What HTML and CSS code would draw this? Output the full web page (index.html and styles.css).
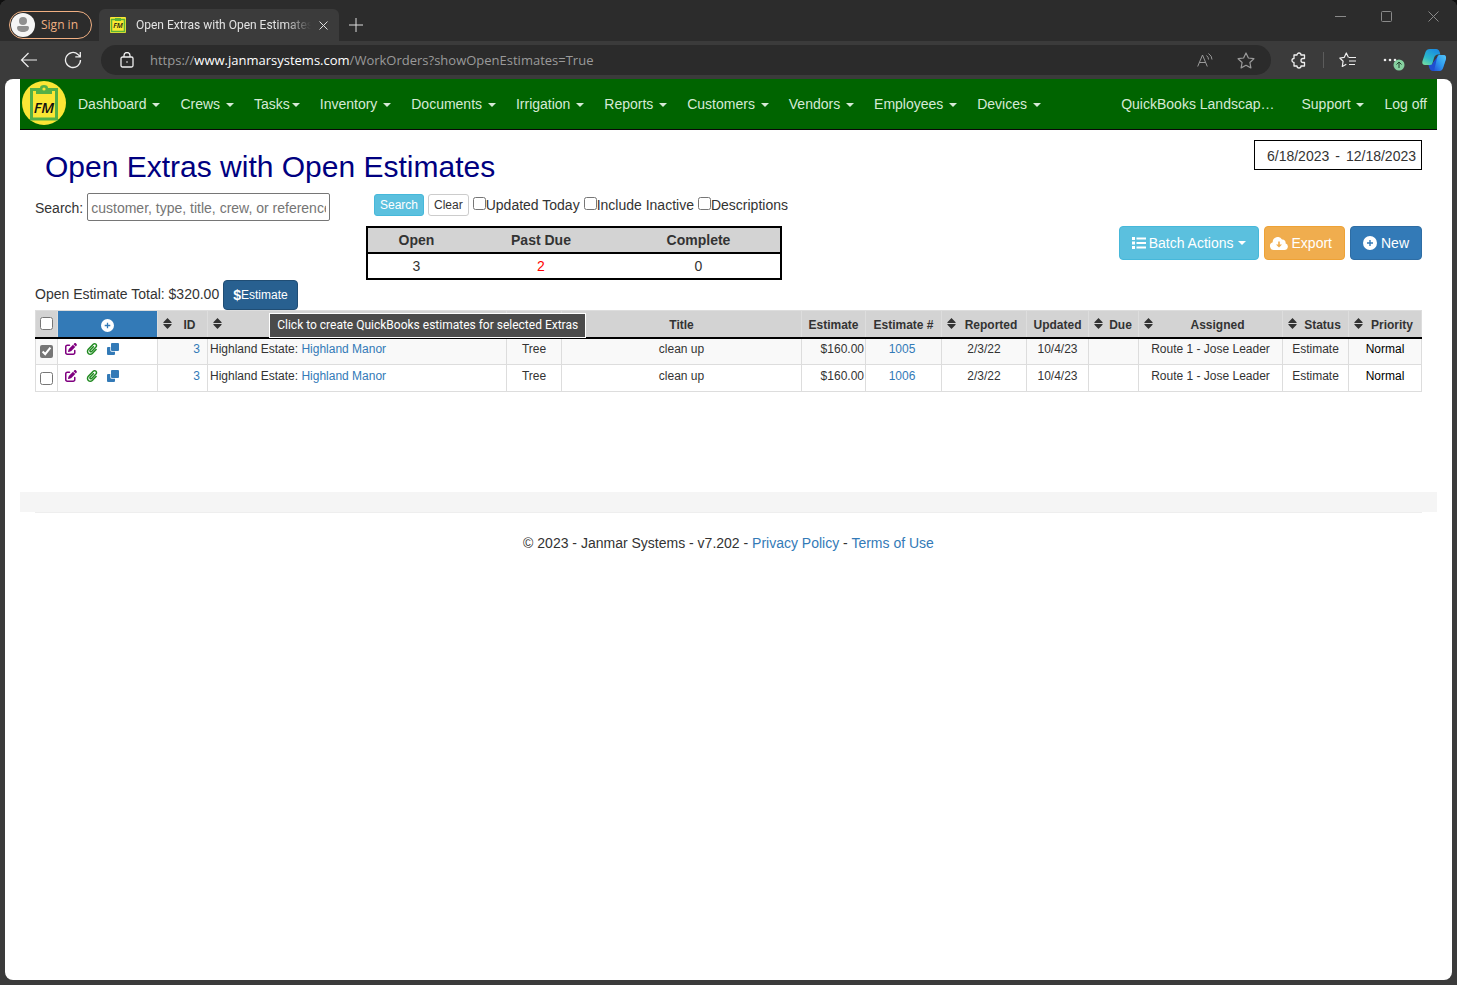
FILE: index.html
```html
<!DOCTYPE html>
<html lang="en">
<head>
<meta charset="utf-8">
<title>Open Extras with Open Estimates</title>
<link rel="stylesheet" href="styles.css">
</head>
<body>
<svg class="defs" width="0" height="0" aria-hidden="true">
  <symbol id="sort" viewBox="0 0 9 11"><path d="M4.500 0 8.600 4.200Q9 5 8.200 5H.8Q0 5 .4 4.200ZM4.500 11 .4 6.800Q0 6 .8 6H8.200Q9 6 8.600 6.800Z"/></symbol>
  <symbol id="edit" viewBox="0 0 512 512"><path d="M471.6 21.7c-21.9-21.9-57.3-21.9-79.2 0L362.3 51.7l97.9 97.9 30.1-30.1c21.9-21.9 21.9-57.3 0-79.2L471.6 21.7zm-299.2 220c-6.1 6.1-10.8 13.6-13.5 21.9l-29.6 88.8c-2.9 8.6-.6 18.1 5.8 24.6s15.9 8.7 24.6 5.8l88.8-29.6c8.2-2.7 15.7-7.4 21.9-13.5L437.7 172.3 339.7 74.3 172.4 241.7zM96 64C43 64 0 107 0 160V416c0 53 43 96 96 96H352c53 0 96-43 96-96V320c0-17.700-14.300-32-32-32s-32 14.300-32 32v96c0 17.700-14.300 32-32 32H96c-17.700 0-32-14.300-32-32V160c0-17.700 14.300-32 32-32h96c17.700 0 32-14.300 32-32s-14.300-32-32-32H96z"/></symbol>
  <symbol id="clip" viewBox="0 0 448 512"><path d="M43.246 466.142c-58.43-60.289-57.341-157.511 1.386-217.581L254.392 34c44.316-45.332 116.351-45.336 160.671 0 43.89 44.894 43.943 117.329 0 162.276L232.214 383.128c-29.855 30.537-78.633 30.111-107.982-.998-28.275-29.97-27.368-77.473 1.452-106.953l143.743-146.835c6.182-6.314 16.312-6.422 22.626-.241l22.861 22.379c6.315 6.182 6.422 16.312.241 22.626L171.427 319.927c-4.932 5.045-5.236 13.428-.648 18.292 4.372 4.634 11.245 4.711 15.688.165l182.849-186.851c19.613-20.062 19.613-52.725-.011-72.798-19.189-19.627-49.957-19.637-69.154 0L90.39 293.295c-34.763 35.56-35.299 93.12-1.191 128.313 34.01 35.093 88.985 35.137 123.058.286l172.06-175.999c6.177-6.319 16.307-6.433 22.626-.256l22.877 22.364c6.319 6.177 6.434 16.307.256 22.626l-172.06 175.998c-59.576 60.938-155.943 60.216-214.77-.485z"/></symbol>
  <symbol id="clone" viewBox="0 0 12 12"><path d="M5 0h6q1 0 1 1v6q0 1-1 1H5Q4 8 4 7V1q0-1 1-1ZM1 4h2.300v3.200Q3.300 8.700 4.800 8.700H8V11q0 1-1 1H1q-1 0-1-1V5q0-1 1-1Z"/></symbol>
  <symbol id="plus" viewBox="0 0 14 14"><path fill-rule="evenodd" d="M7 0a7 7 0 1 1 0 14A7 7 0 0 1 7 0ZM6.300 4v2.300H4v1.400h2.300V10h1.400V7.700H10V6.300H7.700V4Z"/></symbol>
</svg>

<div class="window">
  <header class="titlebar">
    <button class="signin" type="button">
      <svg width="24" height="24" viewBox="0 0 24 24"><circle cx="12" cy="12" r="12" fill="#f5f5f5"/><circle cx="12" cy="8" r="4" fill="#8f8f8f"/><path d="M6 14.500q0-1.500 1.500-1.500h9q1.500 0 1.500 1.500c0 3-2.500 4.500-6 4.500s-6-1.500-6-4.500Z" fill="#8f8f8f"/></svg>
      <span>Sign in</span>
    </button>
    <div class="tab">
      <svg width="16" height="16" viewBox="0 0 16 16"><rect width="16" height="16" rx="1" fill="#fbe832"/><path d="M1.500 2.500h13v12h-13z" fill="none" stroke="#5cb338" stroke-width="1.500"/><path d="M5 1h6v3H5z" fill="#5cb338"/><text x="8" y="11" text-anchor="middle" class="mark-small">FM</text></svg>
      <span class="tab-title">Open Extras with Open Estimates</span>
      <button class="bare" type="button" aria-label="Close tab"><svg width="9" height="9" viewBox="0 0 9 9" fill="none" stroke="#ddd"><path d="m.5.5 8 8m0-8-8 8"/></svg></button>
    </div>
    <button class="bare newtab" type="button" aria-label="New tab"><svg width="14" height="14" viewBox="0 0 14 14" fill="none" stroke="#ddd"><path d="M7 0v14M0 7h14"/></svg></button>
    <div class="controls">
      <button class="bare" type="button" aria-label="Minimize"><svg width="11" height="11" viewBox="0 0 11 11" fill="none" stroke="#8a8a8a"><path d="M0 5.500h11"/></svg></button>
      <button class="bare" type="button" aria-label="Maximize"><svg width="11" height="11" viewBox="0 0 11 11" fill="none" stroke="#8a8a8a"><rect x=".5" y=".5" width="10" height="10" rx="1"/></svg></button>
      <button class="bare" type="button" aria-label="Close"><svg width="11" height="11" viewBox="0 0 11 11" fill="none" stroke="#8a8a8a"><path d="m.5.5 10 10m0-10-10 10"/></svg></button>
    </div>
  </header>

  <div class="toolbar">
    <button class="bare tool" type="button" aria-label="Back"><svg width="18" height="16" viewBox="0 0 18 16" fill="none" stroke="#eee" stroke-width="1.200"><path d="M17 8H1.500M8.500 1l-7 7 7 7"/></svg></button>
    <button class="bare tool" type="button" aria-label="Refresh"><svg width="18" height="18" viewBox="0 0 18 18" fill="none" stroke="#eee" stroke-width="1.300"><path d="M16.500 9a7.500 7.500 0 1 1-2.500-5.600L16 5.500M16.300 1v4.800h-5"/></svg></button>
    <div class="address">
      <svg width="14" height="16" viewBox="0 0 14 16" fill="none" stroke="#eee" stroke-width="1.300"><rect x="1" y="5" width="12" height="10" rx="1.500"/><path d="M4 5V3.500a3 3 0 0 1 6 0V5"/><circle cx="7" cy="10" r=".8" fill="#eee" stroke="none"/></svg>
      <span class="url">https://<b>www.janmarsystems.com</b>/WorkOrders?showOpenEstimates=True</span>
      <button class="bare" type="button" aria-label="Read aloud"><svg width="16" height="15" viewBox="0 0 16 15" fill="none" stroke="#9a9a9a"><path d="M.7 13.500 5.500 2l4.800 11.500M2.300 9.500h6.400M9.500 2.500q2 1.500 2 4M11.500.5q3.500 2.500 3.500 6"/></svg></button>
      <button class="bare" type="button" aria-label="Favorite"><svg width="18" height="17" viewBox="0 0 18 17" fill="none" stroke="#9a9a9a" stroke-width="1.200" stroke-linejoin="round"><path d="m9 1 2.400 5 5.500.700-4 3.800 1 5.400L9 13.300l-4.900 2.600 1-5.400-4-3.800L6.600 6Z"/></svg></button>
    </div>
    <button class="bare tool" type="button" aria-label="Extensions"><svg width="16" height="17" viewBox="0 0 16 17" fill="none" stroke="#eee" stroke-width="1.300" stroke-linejoin="round"><path d="M3 3h3a2 2 0 1 1 4 0h3.500v3.500H12a2 2 0 1 0 0 4h1.500V14H10a2 2 0 0 1-4 0H3v-3.500a2 2 0 1 1 0-4Z"/></svg></button>
    <span class="divider"></span>
    <button class="bare tool" type="button" aria-label="Favorites list"><svg width="18" height="16" viewBox="0 0 18 16" fill="none" stroke="#eee" stroke-width="1.200" stroke-linejoin="round"><path d="M9.500 5.500 7.300 1 5.300 5.300.8 6l3.300 3.200L3.300 14.500l4-2.200M10 5.500h7M10 9h7M10 12.500h6"/></svg></button>
    <button class="bare tool" type="button" aria-label="Settings"><svg width="30" height="22" viewBox="0 0 30 22"><g fill="#eee"><circle cx="8" cy="11" r="1.300"/><circle cx="13" cy="11" r="1.300"/><circle cx="18" cy="11" r="1.300"/></g><circle cx="22" cy="16" r="5.500" fill="#86d1a0"/><path d="M22 19v-6m-2.500 2.500L22 13l2.500 2.500" fill="none" stroke="#25432f"/></svg></button>
    <button class="bare copilot" type="button" aria-label="Copilot"><svg width="24" height="22" viewBox="0 0 24 22">
      <defs><linearGradient id="ca" x1="0" y1="1" x2="0.600" y2="0"><stop offset="0" stop-color="#7de39b"/><stop offset=".45" stop-color="#2cb9c9"/><stop offset="1" stop-color="#1b8ee0"/></linearGradient><linearGradient id="cb" x1="0" y1="1" x2="1" y2="0"><stop offset="0" stop-color="#2453d6"/><stop offset=".5" stop-color="#2f9df0"/><stop offset="1" stop-color="#56c8f5"/></linearGradient></defs>
      <path d="M8 0h6q3 0 4 4l.3 1.500H16q-3 0-4 3.500L10 16H3Q-.5 16 .5 12L3.500 3Q4.500 0 8 0Z" fill="url(#ca)"/>
      <path d="M17 6h4q4 0 3 4l-3 9q-1 3-4 3h-6q-3 0-4-4l-.5-2H8q2.500 0 3.300-3Z" fill="#1f4fd0"/>
      <path d="M17 6h4q4 0 3 4l-3 9q-1 3-4 3h-5l3-13q.7-3 2-3Z" fill="url(#cb)"/></svg></button>
  </div>

  <div class="page">
    <nav class="navbar">
      <a class="brand" href="#" aria-label="Home"><svg width="44" height="44" viewBox="0 0 44 44"><circle cx="22" cy="22" r="22" fill="#fbe635"/><path d="M9.500 8.500h25v29.500h-25z" fill="none" stroke="#55b046" stroke-width="3"/><path d="M14 13V7h4q0-3 4-3t4 3h4v6z" fill="#55b046"/><circle cx="22" cy="8" r="1.600" fill="#fbe635"/><text x="22" y="32" text-anchor="middle" class="mark">FM</text></svg></a>
      <a href="#">Dashboard <i class="caret"></i></a>
      <a href="#">Crews <i class="caret"></i></a>
      <a href="#">Tasks<i class="caret"></i></a>
      <a href="#">Inventory <i class="caret"></i></a>
      <a href="#">Documents <i class="caret"></i></a>
      <a href="#">Irrigation <i class="caret"></i></a>
      <a href="#">Reports <i class="caret"></i></a>
      <a href="#">Customers <i class="caret"></i></a>
      <a href="#">Vendors <i class="caret"></i></a>
      <a href="#">Employees <i class="caret"></i></a>
      <a href="#">Devices <i class="caret"></i></a>
      <a class="account" href="#">QuickBooks Landscap…</a>
      <a href="#">Support <i class="caret"></i></a>
      <a href="#">Log off</a>
    </nav>

    <main>
      <div class="heading">
        <h1>Open Extras with Open Estimates</h1>
        <button class="dates" type="button"><span>6/18/2023</span><span>-</span><span>12/18/2023</span></button>
      </div>

      <div class="filters">
        <div class="search">
          <label for="q">Search:</label>
          <input id="q" type="text" placeholder="customer, type, title, crew, or reference">
        </div>
        <div>
          <div class="options">
            <button class="btn small info" type="button">Search</button>
            <button class="btn small plain" type="button">Clear</button>
            <label><input type="checkbox">Updated Today</label>
            <label><input type="checkbox">Include Inactive</label>
            <label><input type="checkbox">Descriptions</label>
          </div>
          <table class="summary">
            <colgroup><col class="s-open"><col class="s-due"><col></colgroup>
            <thead><tr><th>Open</th><th>Past Due</th><th>Complete</th></tr></thead>
            <tbody><tr><td>3</td><td class="late">2</td><td>0</td></tr></tbody>
          </table>
        </div>
        <div class="actions">
          <button class="btn info batch" type="button"><svg width="14" height="12" viewBox="0 0 14 12" fill="currentColor"><path d="M0 0h3v3H0zM0 4.500h3v3H0zM0 9h3v3H0zM4.500.5H14v2H4.500zM4.500 5H14v2H4.500zM4.500 9.500H14v2H4.500z"/></svg> Batch Actions<i class="caret"></i></button>
          <button class="btn export" type="button"><svg width="18" height="13" viewBox="0 0 18 13" fill="currentColor"><path fill-rule="evenodd" d="M4 13a4 4 0 0 1-1.300-7.800A5 5 0 0 1 12 2.500a3 3 0 0 1 3.500 3.700A3.500 3.500 0 0 1 14.500 13ZM8.200 4.500v3H6L9 10.500l3-3H9.800v-3Z"/></svg> Export</button>
          <button class="btn primary" type="button"><svg width="14" height="14" fill="#fff"><use href="#plus"/></svg> New</button>
        </div>
      </div>

      <div class="total">
        <span>Open Estimate Total: $320.00</span>
        <div class="tip-anchor">
          <button class="btn estimate" type="button" aria-describedby="tip"><b>$</b>Estimate</button>
          <div class="tip" id="tip" role="tooltip">Click to create QuickBooks estimates for selected Extras</div>
        </div>
      </div>

      <table class="grid">
        <colgroup><col class="c-check"><col class="c-tools"><col class="c-id"><col class="c-customer"><col class="c-type"><col><col class="c-est"><col class="c-num"><col class="c-rep"><col class="c-upd"><col class="c-due"><col class="c-asg"><col class="c-stat"><col class="c-pri"></colgroup>
        <thead>
          <tr>
            <th><input type="checkbox" aria-label="Select all"></th>
            <th class="add"><button class="bare" type="button" aria-label="Add"><svg width="13" height="13" fill="#fff"><use href="#plus"/></svg></button></th>
            <th><div class="sort"><svg width="9" height="11"><use href="#sort"/></svg><span>ID</span></div></th>
            <th aria-label="Customer"><div class="sort"><svg width="9" height="11"><use href="#sort"/></svg><span></span></div></th>
            <th aria-label="Type"></th>
            <th>Title</th>
            <th>Estimate</th>
            <th>Estimate #</th>
            <th><div class="sort"><svg width="9" height="11"><use href="#sort"/></svg><span>Reported</span></div></th>
            <th>Updated</th>
            <th><div class="sort"><svg width="9" height="11"><use href="#sort"/></svg><span>Due</span></div></th>
            <th><div class="sort"><svg width="9" height="11"><use href="#sort"/></svg><span>Assigned</span></div></th>
            <th><div class="sort"><svg width="9" height="11"><use href="#sort"/></svg><span>Status</span></div></th>
            <th><div class="sort"><svg width="9" height="11"><use href="#sort"/></svg><span>Priority</span></div></th>
          </tr>
        </thead>
        <tbody>
          <tr>
            <td class="pick"><input type="checkbox" aria-label="Select 1005" checked></td>
            <td><div class="rowtools"><a href="#" aria-label="Edit" class="edit"><svg width="12" height="12"><use href="#edit"/></svg></a><a href="#" aria-label="Attachments" class="clip"><svg width="12" height="12"><use href="#clip"/></svg></a><a href="#" aria-label="Copy" class="copy"><svg width="12" height="12"><use href="#clone"/></svg></a></div></td>
            <td class="id"><a href="#">3</a></td>
            <td class="customer">Highland Estate: <a href="#">Highland Manor</a></td>
            <td>Tree</td><td>clean up</td><td class="money">$160.00</td><td class="num"><a href="#">1005</a></td><td>2/3/22</td><td>10/4/23</td><td></td><td>Route 1 - Jose Leader</td><td>Estimate</td><td class="priority">Normal</td>
          </tr>
          <tr>
            <td class="pick"><input type="checkbox" aria-label="Select 1006"></td>
            <td><div class="rowtools"><a href="#" aria-label="Edit" class="edit"><svg width="12" height="12"><use href="#edit"/></svg></a><a href="#" aria-label="Attachments" class="clip"><svg width="12" height="12"><use href="#clip"/></svg></a><a href="#" aria-label="Copy" class="copy"><svg width="12" height="12"><use href="#clone"/></svg></a></div></td>
            <td class="id"><a href="#">3</a></td>
            <td class="customer">Highland Estate: <a href="#">Highland Manor</a></td>
            <td>Tree</td><td>clean up</td><td class="money">$160.00</td><td class="num"><a href="#">1006</a></td><td>2/3/22</td><td>10/4/23</td><td></td><td>Route 1 - Jose Leader</td><td>Estimate</td><td class="priority">Normal</td>
          </tr>
        </tbody>
      </table>
    </main>

    <div class="band"></div>
    <footer>© 2023 - Janmar Systems - v7.202 - <a href="#">Privacy Policy</a> - <a href="#">Terms of Use</a></footer>
  </div>
</div>
</body>
</html>
```
FILE: styles.css
```css
* { box-sizing: border-box; }
body {
  margin: 0;
  background: #101010;
  color: #333;
  font: 14px/20px "Liberation Sans", Arial, sans-serif;
}
button, input { font: inherit; color: inherit; }
button { cursor: pointer; }
a { color: #337ab7; text-decoration: none; }
svg { display: block; flex: none; }
.defs { position: absolute; }
.bare {
  display: flex;
  align-items: center;
  justify-content: center;
  flex: none;
  padding: 0;
  border: 0;
  background: none;
}

/* Browser window */
.window {
  display: flex;
  flex-direction: column;
  min-height: 100vh;
  padding-bottom: 5px;
  background: #3b3b3b;
  border-radius: 8px 8px 0 0;
}
.titlebar {
  display: flex;
  height: 41px;
  padding-left: 9px;
  background: #2c2c2c;
  border-radius: 8px 8px 0 0;
  color: #e3e3e3;
  font: 12px/16px "Open Sans", "Noto Sans", sans-serif;
}
.signin {
  display: flex;
  align-items: center;
  gap: 6px;
  width: 83px;
  height: 28px;
  margin: 11px 7px 0 0;
  padding: 0 0 0 1px;
  background: none;
  border: 1px solid #f0b083;
  border-radius: 14px;
  color: #f0b083;
}
.tab {
  display: flex;
  align-items: center;
  width: 240px;
  margin-top: 9px;
  padding: 0 11px;
  background: #3b3b3b;
  border-radius: 6px 6px 0 0;
}
.tab-title {
  flex: 1;
  margin: 0 8px 0 10px;
  overflow: hidden;
  font-family: Roboto, "Noto Sans", sans-serif;
  white-space: nowrap;
  -webkit-mask-image: linear-gradient(to right, #000 85%, transparent);
  mask-image: linear-gradient(to right, #000 85%, transparent);
}
.newtab { width: 34px; margin-top: 9px; }
.controls { display: flex; height: 33px; margin-left: auto; }
.controls button { width: 46px; }
.controls button:last-child { width: 48px; }

.toolbar {
  display: flex;
  align-items: center;
  height: 38px;
  padding: 0 3px 0 7px;
}
.tool { width: 44px; height: 30px; }
.address {
  display: flex;
  align-items: center;
  flex: 1;
  gap: 24px;
  height: 30px;
  margin: 0 6px;
  padding: 0 16px 0 19px;
  background: #2b2b2b;
  border-radius: 15px;
  color: #9a9a9a;
  font: 13px/20px "Open Sans", "Noto Sans", sans-serif;
}
.url { flex: 1; margin-left: -8px; overflow: hidden; white-space: nowrap; }
.url b { color: #fff; font-weight: 400; }
.divider { width: 1px; height: 16px; margin: 0 2px; background: #5c5c5c; }
.copilot { width: 40px; }

/* Site page */
.page {
  flex: 1;
  margin: 0 5px;
  padding: 0 15px;
  background: #fff;
  border-radius: 8px;
}
.navbar {
  display: flex;
  align-items: center;
  height: 51px;
  background: #006400;
  border-bottom: 1px solid #080808;
}
.navbar a { padding: 0 10px; color: #d6ead6; white-space: nowrap; }
.navbar .brand { padding: 0 2px 2px; }
.navbar .account { margin-left: auto; margin-right: 7px; }
.mark { font: italic 600 15px "Open Sans", sans-serif; fill: #111; }
.mark-small { font: italic 600 7px "Open Sans", sans-serif; fill: #111; }
.caret {
  display: inline-block;
  margin-left: 2px;
  vertical-align: middle;
  border-top: 4px solid;
  border-right: 4px solid transparent;
  border-left: 4px solid transparent;
}

main { min-height: 362px; padding: 10px 15px 0; }
.heading { display: flex; justify-content: space-between; align-items: flex-start; height: 53px; }
h1 {
  margin: 0 0 0 10px;
  color: #000080;
  font-size: 30px;
  font-weight: 400;
  line-height: 53px;
}
.dates {
  display: flex;
  align-items: center;
  gap: 6px;
  height: 30px;
  padding: 2px 5px 0 12px;
  background: #fff;
  border: 1px solid #000;
}
.filters { display: grid; grid-template-columns: 331px 416px 1fr; }
.search { display: flex; align-items: center; gap: 4px; height: 28px; }
.search label { padding-top: 2px; }
.search input {
  width: 243px;
  height: 28px;
  padding: 2px 3px 0;
  border: 1px solid #767676;
  border-radius: 2px;
}
.search input::placeholder { color: #757575; }
.options {
  display: flex;
  align-items: center;
  gap: 4px;
  height: 33px;
  padding: 0 0 9px 8px;
  white-space: nowrap;
}
.options label { display: flex; align-items: center; }
input[type="checkbox"] { width: 13px; height: 13px; margin: 0; accent-color: #767676; }
.options input[type="checkbox"] { margin-bottom: 3px; }

.btn {
  display: inline-flex;
  align-items: center;
  gap: 4px;
  height: 34px;
  padding: 0 12px;
  border: 1px solid transparent;
  border-radius: 4px;
  color: #fff;
  white-space: nowrap;
}
.small { height: 22px; padding: 0 5px; border-radius: 3px; font-size: 12px; }
.info { background: #5bc0de; border-color: #46b8da; }
.batch { gap: 3px; }
.batch .caret { margin-left: 1px; }
.plain { background: #fff; border-color: #ccc; color: #333; }
.export { padding-left: 5px; background: #f0ad4e; border-color: #eea236; }
.primary { background: #337ab7; border-color: #2e6da4; }
.estimate { height: 30px; gap: 0; padding: 0 9px; background: #286090; border-color: #204d74; font-size: 12px; }
.estimate b { font-size: 14px; }
.actions { display: flex; justify-content: flex-end; gap: 5px; padding-top: 33px; }

table { width: 100%; border-collapse: collapse; table-layout: fixed; }
th, td { padding: 0; text-align: center; }
.summary { border: 2px solid #000; }
.summary th { height: 26px; background: #d3d3d3; border-bottom: 2px solid #000; }
.summary td { height: 26px; }
.summary .late { color: #f00; }
.s-open { width: 98px; }
.s-due { width: 152px; }

.total { display: flex; align-items: center; gap: 4px; height: 30px; }
.total > span { padding-bottom: 2px; }
.tip-anchor { position: relative; }
.tip {
  position: absolute;
  top: 33px;
  left: 46px;
  z-index: 1;
  height: 25px;
  padding: 0 7px;
  background: #4b4b4b;
  border: 1px solid #fff;
  color: #fff;
  font: 12px/23px Roboto, "Noto Sans", sans-serif;
  white-space: nowrap;
}

.grid { font-size: 12px; line-height: 18px; }
.grid th { height: 27px; padding-top: 3px; background: #d3d3d3; border: 1px solid #ddd; border-bottom: 2px solid #000; }
.grid td { height: 27px; padding-bottom: 5px; border: 1px solid #ddd; }
.grid tbody tr:first-child td { background: #f9f9f9; border-top: 2px solid #000; }
.grid tbody tr:first-child td:nth-child(2) { background: #fff; }
.grid th input, .grid td input { display: block; margin: 0 auto; }
.grid th:first-child { padding: 0; }
.grid tbody .pick { padding: 0; }
.grid .add { background: #337ab7; }
.grid .add button { width: 100%; }
.sort { display: flex; align-items: center; padding-left: 5px; }
.sort svg { margin-bottom: 3px; fill: #333; }
.sort span { flex: 1; }
.rowtools { display: flex; gap: 9px; padding-left: 7px; }
.rowtools svg { fill: currentColor; }
.rowtools .edit { color: #800080; }
.rowtools .clip { color: #228b22; }
.grid .id { padding-right: 7px; text-align: right; }
.grid .customer { padding-left: 2px; text-align: left; }
.grid .money { padding-right: 1px; text-align: right; }
.grid .num { padding-right: 3px; }
.priority { color: #000; }
.c-check { width: 22px; }
.c-tools { width: 100px; }
.c-id, .c-due { width: 50px; }
.c-customer { width: 299px; }
.c-type { width: 55px; }
.c-est { width: 64px; }
.c-num { width: 76px; }
.c-rep { width: 85px; }
.c-upd { width: 62px; }
.c-asg { width: 144px; }
.c-stat { width: 66px; }
.c-pri { width: 73px; }

.band { height: 20px; background: #f5f5f5; }
footer {
  margin: 0 15px;
  padding: 20px 0;
  border-top: 1px solid #eee;
  text-align: center;
}
```
